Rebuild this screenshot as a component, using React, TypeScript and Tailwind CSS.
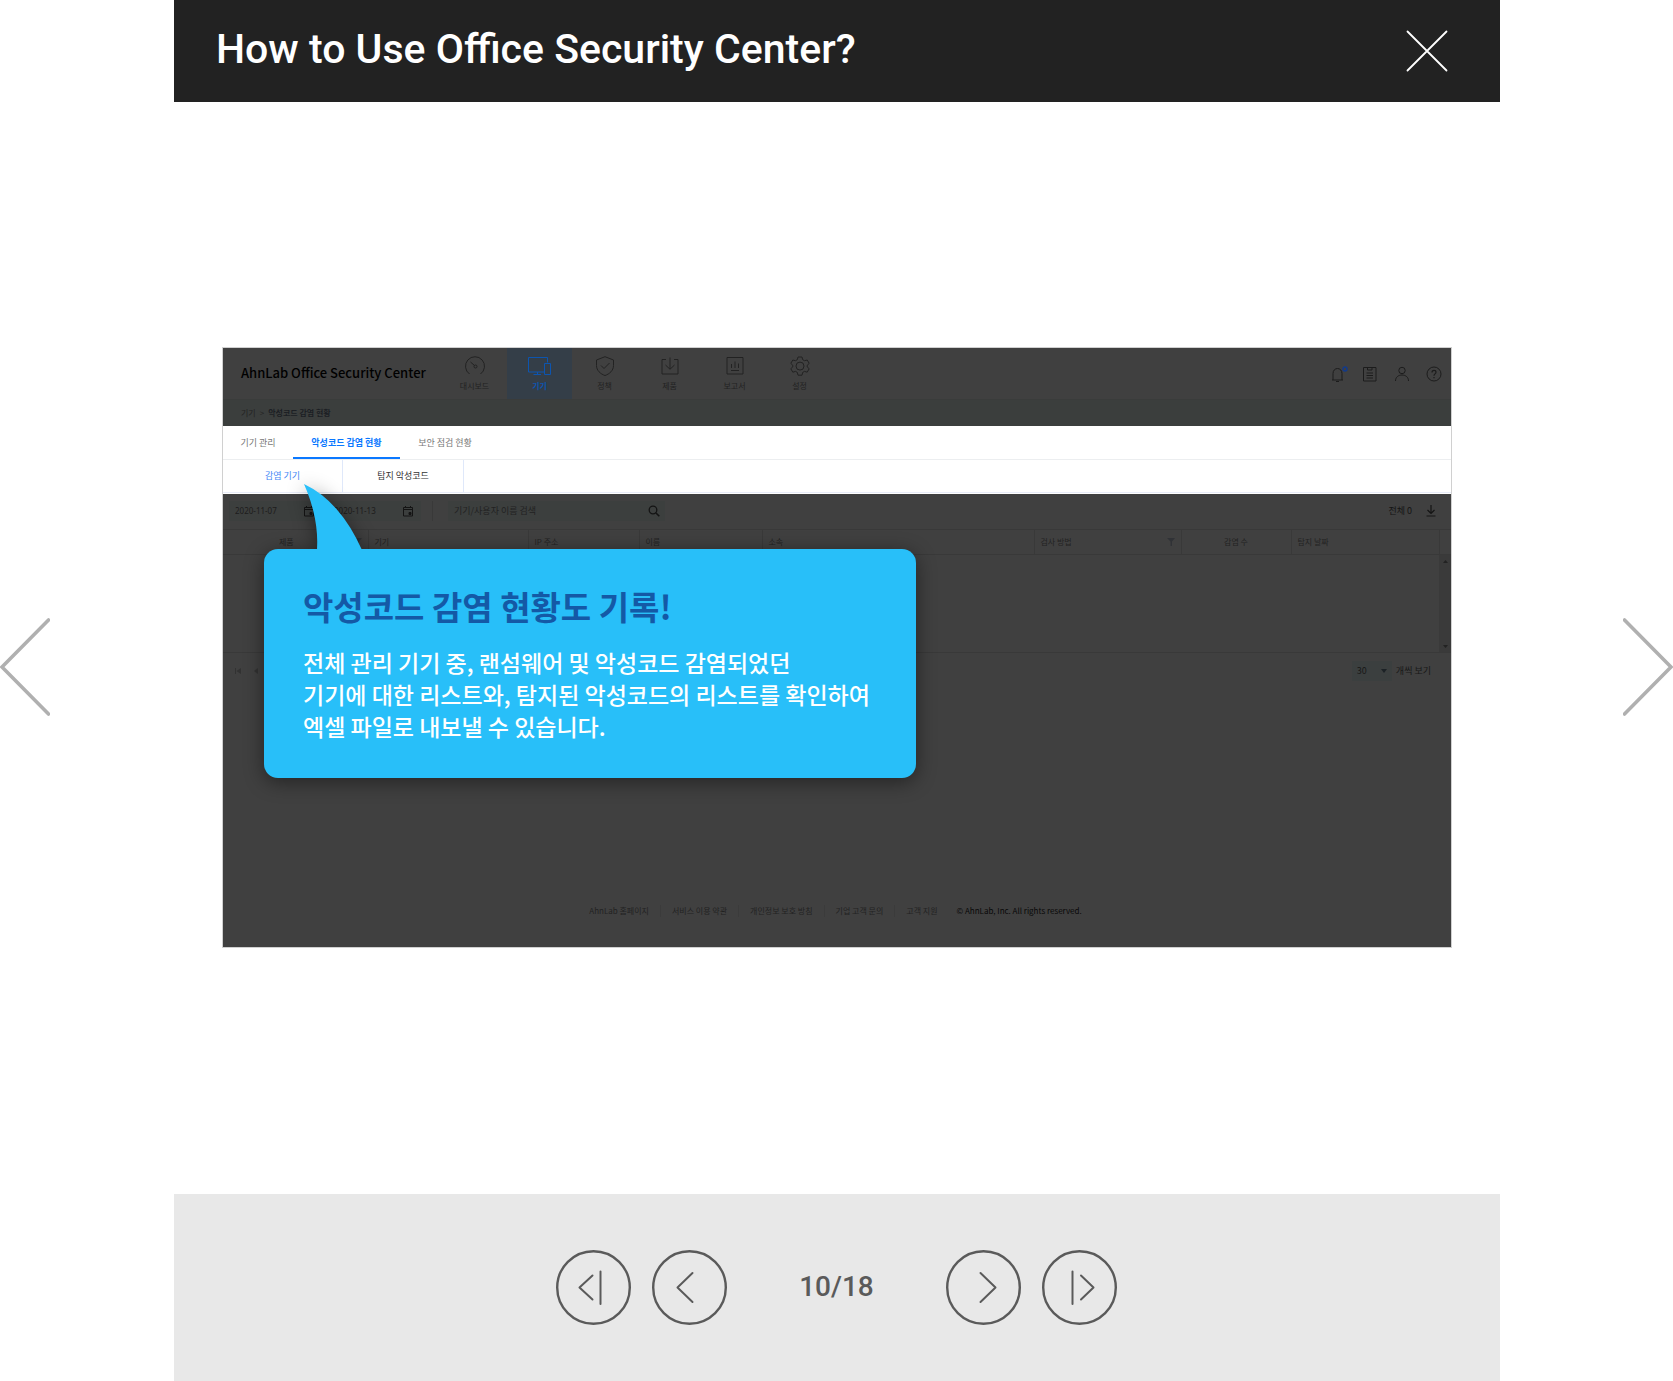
import type { ReactNode } from "react";

function Icon({ children, className = "size-5", box = "0 0 20 20" }: { children: ReactNode; className?: string; box?: string }) {
  return (
    <svg viewBox={box} className={className} fill="none" stroke="currentColor" strokeWidth="1" aria-hidden="true">
      {children}
    </svg>
  );
}

const menu = [
  { label: "대시보드", icon: <><path d="M4.5 18A9.5 9.5 0 1 1 15.500 18" /><circle cx="10.500" cy="10.500" r="1.500" /><path d="M9.500 9.500 5.500 6" /></> },
  { label: "기기", active: true, icon: <><path d="M14 16H-1.500V1.500H17.500V6.500" /><path d="M3.500 18.500H11M7.500 16V18.500" /><path d="M14.500 7.500H20.500V18.500H14.500Z" /></> },
  { label: "정책", icon: <><path d="M10 .700 18.500 4V9.500C18.500 14.500 14.500 18 10 19.500C5.500 18 1.500 14.500 1.500 9.500V4Z" /><path d="m6 9.500 3 3 5.500-5.500" /></> },
  { label: "제품", icon: <><path d="M6 3.500H2V18H18V3.500H14" /><path d="M10 1.500V13M5.500 9 10 13.300 14.500 9" /></> },
  { label: "보고서", icon: <><path d="M2 1.500H18V18H2Z" /><path d="M6.500 8V12M10 5.500V12M13.500 7.500V12M6 14.500H14" /></> },
  { label: "설정", icon: <><path d="M8 1H12L12.700 3.700 14.500 4.700 17.200 4 19.200 7.400 17.200 9.300V10.900L19.200 12.700 17.200 16.200 14.500 15.400 12.700 16.400 12 19.200H8L7.300 16.400 5.500 15.400 2.800 16.200.800 12.700 2.800 10.900V9.300L.800 7.400 2.800 4 5.500 4.700 7.300 3.700Z" strokeLinejoin="round" /><circle cx="10" cy="10.100" r="4" /></> },
];

const tools = [
  { label: "알림", icon: <><path d="M4 16H15M5 16V9.500C5 6.500 7 4.500 9.500 4.500S14 6.500 14 9.500V16M8 17.500H11" /><circle cx="17" cy="5" r="2" className="stroke-[#123a8a]" strokeWidth="1.500" /></> },
  { label: "문서", icon: <><path d="M3.500 3.500H16V17H3.500Z" /><path d="M7.500 3.500V6H12V3.500M6.500 9H13M6.500 11.500H13M6.500 14H13" /></> },
  { label: "사용자", icon: <><circle cx="10" cy="6.500" r="3.200" /><path d="M3.500 17C3.500 13 6.500 11 10 11S16.500 13 16.500 17" /></> },
  { label: "도움말", icon: <><circle cx="10" cy="10" r="7" /><path d="M8 8.500C8 5.500 12 5.800 12 8.200C12 10 10 9.800 10 11.800M10 13V14.200" strokeWidth="1.200" /></> },
];

const footerLinks = ["AhnLab 홈페이지", "서비스 이용 약관", "개인정보 보호 방침", "기업 고객 문의", "고객 지원"];

function DateField({ value, label }: { value: string; label: string }) {
  return (
    <label className="flex h-5 w-[93px] items-center justify-between bg-[#3c3f3e] pr-[7px] pl-1.5">
      <input aria-label={label} defaultValue={value} className="w-14 bg-transparent font-['Noto_Sans',sans-serif] text-[8px] text-[#1c1c1c] outline-none" />
      <Icon className="size-3 text-[#141414]" box="0 0 12 12">
        <path d="M1.500 2.500H10.500V11H1.500ZM1.500 4.500H10.500M3.500 1V2.500M8.500 1V2.500" />
        <path d="M7 7.500H9V9.500H7Z" fill="currentColor" />
      </Icon>
    </label>
  );
}

function Funnel() {
  return (
    <svg viewBox="0 0 8 8" className="size-2 fill-[#303236]" aria-hidden="true">
      <path d="M0 0H8L5 3.500V8H3.500V3.500Z" />
    </svg>
  );
}

function DeviceTable() {
  const th = "border-r border-[#393939] px-1.5 text-left font-normal";
  return (
    <table className="w-full table-fixed border-collapse border-y border-[#393939] text-[8px] text-[#222]">
      <colgroup>
        <col className="w-[145px]" />
        <col className="w-40" />
        <col className="w-[111px]" />
        <col className="w-[123px]" />
        <col />
        <col className="w-[147px]" />
        <col className="w-[110px]" />
        <col className="w-[148px]" />
        <col className="w-3" />
      </colgroup>
      <thead>
        <tr className="h-[25px] border-b border-[#393939]">
          <th className={th}>
            <span className="flex items-center justify-between pl-[50px]">제품<Funnel /></span>
          </th>
          <th className={th}>기기</th>
          <th className={th}>IP 주소</th>
          <th className={th}>이름</th>
          <th className={th}>소속</th>
          <th className={th}>
            <span className="flex items-center justify-between">검사 방법<Funnel /></span>
          </th>
          <th className="border-r border-[#393939] text-center font-normal">감염 수</th>
          <th className={th}>탐지 날짜</th>
          <th />
        </tr>
      </thead>
      <tbody>
        <tr className="h-[97px]">
          <td colSpan={8} />
          <td className="bg-[#3a3a3a] p-0">
            <svg viewBox="0 0 11 97" className="mx-auto h-[97px] w-[11px] fill-[#222]" aria-hidden="true">
              <path d="M3 8 5.500 5 8 8ZM3 90H8L5.500 93Z" />
            </svg>
          </td>
        </tr>
      </tbody>
    </table>
  );
}

function Callout() {
  return (
    <aside className="absolute top-[201px] left-[41px] w-[652px] rounded-[14px] bg-[#28bff9] px-[39px] pt-[33px] pb-9 drop-shadow-[0_4px_10px_rgba(0,0,0,0.45)]">
      <svg viewBox="0 0 58 66" className="absolute -top-[65px] left-10 h-[66px] w-[58px] fill-[#28bff9]" aria-hidden="true">
        <path d="M0 0Q15 34 13 66H58Q36 17 0 0Z" />
      </svg>
      <h2 className="text-[33px] leading-[48px] font-bold whitespace-nowrap text-[#1459a6]">악성코드 감염 현황도 기록!</h2>
      <p className="mt-4 text-[23px] leading-8 font-medium whitespace-nowrap text-white">
        전체 관리 기기 중, 랜섬웨어 및 악성코드 감염되었던<br />
        기기에 대한 리스트와, 탐지된 악성코드의 리스트를 확인하여<br />
        엑셀 파일로 내보낼 수 있습니다.
      </p>
    </aside>
  );
}

function Slide() {
  return (
    <section className="relative flex min-h-[601px] flex-col border border-[#d0d0d0] bg-[#404040] font-['Noto_Sans_CJK_KR',sans-serif] text-[9px] leading-3">
      <header className="flex h-[52px] justify-between border-b border-[#3a3c3b]">
        <div className="flex">
          <div className="flex w-[219px] items-center pb-0.5 pl-[18px] text-[13px] font-medium whitespace-nowrap text-black">AhnLab Office Security Center</div>
          <nav className="flex">
            {menu.map((m) => (
              <button
                key={m.label}
                className={
                  m.active
                    ? "flex w-[65px] flex-col items-center gap-1 bg-[#343e48] pt-2 text-[8px] font-bold text-[#0c55b0]"
                    : "flex w-[65px] flex-col items-center gap-1 pt-2 text-[8px] text-[#222]"
                }
              >
                <Icon className="size-5 overflow-visible">{m.icon}</Icon>
                {m.label}
              </button>
            ))}
          </nav>
        </div>
        <div className="flex items-center gap-3 pr-[7px] text-[#1c1c1c]">
          {tools.map((t) => (
            <button key={t.label} aria-label={t.label}>
              <Icon>{t.icon}</Icon>
            </button>
          ))}
        </div>
      </header>
      <div className="flex h-[26px] items-center gap-1 bg-[#3b3e3d] pl-[18px] text-[8px] text-[#222]">
        <span>기기</span>
        <span>&gt;</span>
        <span className="font-bold text-[#1c1f24]">악성코드 감염 현황</span>
      </div>
      <div className="bg-white">
        <nav className="flex h-[34px] border-b border-[#eceef0] text-[#777]">
          <button className="w-[70px]">기기 관리</button>
          <button className="w-[107px] border-b-2 border-[#0a78ff] pt-0.5 font-bold text-[#0a78ff]">악성코드 감염 현황</button>
          <button className="w-[90px]">보안 점검 현황</button>
        </nav>
        <nav className="mb-px flex h-[33px] border-b border-[#e8ecf8]">
          <button className="w-[120px] border-r border-[#dfe8fa] text-[#3f86f5]">감염 기기</button>
          <button className="w-[121px] border-r border-[#dfe8fa] text-[#333]">탐지 악성코드</button>
        </nav>
      </div>
      <div className="flex h-[35px] items-center justify-between pr-3.5 pb-0.5 pl-1.5">
        <div className="flex items-center">
          <DateField value="2020-11-07" label="시작일" />
          <span className="w-1.5" />
          <DateField value="2020-11-13" label="종료일" />
          <span className="mx-[11px] h-5 w-px bg-[#393939]" />
          <label className="ml-1 flex h-5 w-[217px] items-center justify-between bg-[#3c3f3e] pr-[5px] pl-1.5">
            <input aria-label="기기/사용자 이름 검색" placeholder="기기/사용자 이름 검색" className="w-40 bg-transparent text-[9px] outline-none placeholder:text-[#222]" />
            <Icon className="size-3 text-[#141414]" box="0 0 12 12">
              <circle cx="5" cy="5" r="3.800" strokeWidth="1.300" />
              <path d="m8 8 3.300 3.300" strokeWidth="1.600" />
            </Icon>
          </label>
        </div>
        <div className="flex items-center gap-[13px] text-[9px] text-[#141414]">
          <span>전체 0</span>
          <button aria-label="내보내기">
            <Icon className="size-3" box="0 0 12 12">
              <path d="M6 0V8.500M2.500 5 6 8.500 9.500 5M1.500 11H10.500" strokeWidth="1.200" />
            </Icon>
          </button>
        </div>
      </div>
      <DeviceTable />
      <div className="mt-2 flex h-5 items-center justify-between pr-5 pl-3">
        <div className="flex gap-3 text-[#323232]">
          <button aria-label="첫 페이지">
            <svg viewBox="0 0 6 6" className="size-1.5 fill-current" aria-hidden="true"><path d="M0 0H1V6H0ZM6 0V6L1.500 3Z" /></svg>
          </button>
          <button aria-label="이전 페이지">
            <svg viewBox="0 0 6 6" className="size-1.5 fill-current" aria-hidden="true"><path d="M5 0V6L1 3Z" /></svg>
          </button>
        </div>
        <label className="flex items-center gap-1 text-[9px] text-[#181818]">
          <span className="flex h-5 w-10 items-center justify-between bg-[#3b3f3f] px-[5px]">
            <select defaultValue="30" className="w-4 appearance-none bg-transparent text-[9px] outline-none">
              <option>30</option>
            </select>
            <svg viewBox="0 0 6 4" className="h-1 w-1.5 fill-[#1c2226]" aria-hidden="true"><path d="M0 0H6L3 4Z" /></svg>
          </span>
          개씩 보기
        </label>
      </div>
      <footer className="mt-auto mb-[30px] flex items-center justify-center gap-[19px] pr-3.5 text-[8px] whitespace-nowrap text-[#222]">
        <ul className="flex">
          {footerLinks.map((l) => (
            <li key={l} className="border-r border-[#3b3b3b] px-[11px] last:border-0 last:pr-0">
              <a href="#">{l}</a>
            </li>
          ))}
        </ul>
        <span className="text-[#080808]">© AhnLab, Inc. All rights reserved.</span>
      </footer>
      <Callout />
    </section>
  );
}

function RoundButton({ label, d }: { label: string; d: string }) {
  return (
    <button aria-label={label} className="size-[75px] shrink-0">
      <svg viewBox="0 0 75 75" className="size-full fill-none stroke-[#5a5a5a]" strokeLinecap="round" strokeLinejoin="round" aria-hidden="true">
        <circle cx="37.500" cy="37.500" r="36.300" strokeWidth="2.400" />
        <path d={d} strokeWidth="2" />
      </svg>
    </button>
  );
}

export default function App() {
  return (
    <div className="flex min-h-screen bg-white font-['Noto_Sans_CJK_KR',sans-serif]">
      <button aria-label="Previous slide" className="flex w-[174px] shrink-0 items-center justify-start pb-12">
        <svg viewBox="0 0 50 98" className="h-[98px] w-[50px] fill-none stroke-[#b0b0b0]" strokeWidth="3.600" strokeLinecap="round" aria-hidden="true">
          <path d="M48.500 2 2 49 48.500 96" />
        </svg>
      </button>
      <div className="flex min-w-0 flex-1 flex-col">
        <header className="flex h-[102px] items-center justify-between bg-[#222] pr-[52px] pl-[42px] text-white">
          <h1 className="pb-1 font-['Roboto',sans-serif] text-[41px] leading-[60px] font-medium">How to Use Office Security Center?</h1>
          <button aria-label="Close">
            <svg viewBox="0 0 42 42" className="size-[42px] fill-none stroke-white" strokeWidth="1.800" strokeLinecap="round" aria-hidden="true">
              <path d="M1.500 1.500 40.500 40.500M40.500 1.500 1.500 40.500" />
            </svg>
          </button>
        </header>
        <main className="flex flex-1 flex-col justify-center px-12 pb-px">
          <Slide />
        </main>
        <footer className="flex h-[187px] items-center justify-center gap-[21px] bg-[#e8e8e8] pr-px pb-px text-[#5a5a5a]">
          <RoundButton label="First slide" d="M36.500 25.500 23.500 37.500 36.500 49.500M44.500 21.500V54" />
          <RoundButton label="Previous" d="M40.500 23 25.500 37.500 40.500 52" />
          <span className="w-[177px] text-center font-['Roboto',sans-serif] text-[28px] font-medium">10/18</span>
          <RoundButton label="Next" d="M34.500 23 49.500 37.500 34.500 52" />
          <RoundButton label="Last slide" d="M30.500 21.500V54M39 25.500 51.500 37.500 39 49.500" />
        </footer>
      </div>
      <button aria-label="Next slide" className="flex w-[173px] shrink-0 items-center justify-end pb-12">
        <svg viewBox="0 0 50 98" className="h-[98px] w-[50px] fill-none stroke-[#b0b0b0]" strokeWidth="3.600" strokeLinecap="round" aria-hidden="true">
          <path d="M1.500 2 48 49 1.500 96" />
        </svg>
      </button>
    </div>
  );
}
